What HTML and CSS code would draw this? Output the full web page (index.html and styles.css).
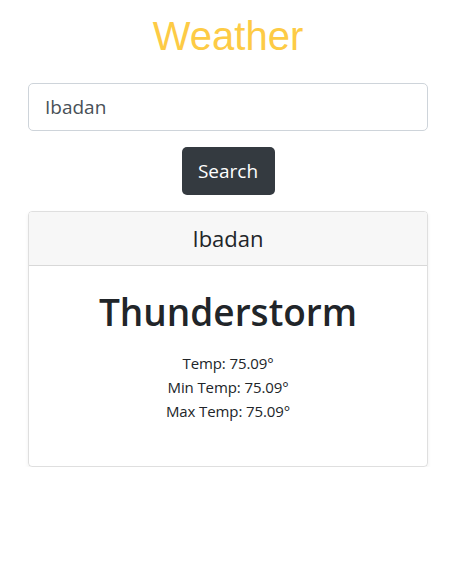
FILE: index.html
```html
<!DOCTYPE html>
<html>
<head>
<meta charset="utf-8">
<link rel="stylesheet" href="styles.css">
</head>
<body>
<div class="app">
  <h1 class="title">Weather</h1>
  <form class="search">
    <input class="field" type="text" value="Ibadan">
    <button class="btn" type="button">Search</button>
  </form>
  <div class="card">
    <div class="card-header">Ibadan</div>
    <div class="card-body">
      <h2 class="cond">Thunderstorm</h2>
      <p class="line">Temp: 75.09°</p>
      <p class="line">Min Temp: 75.09°</p>
      <p class="line">Max Temp: 75.09°</p>
    </div>
  </div>
</div>
</body>
</html>
```
FILE: styles.css
```css
* { box-sizing: border-box; }
html, body { margin: 0; padding: 0; background: #fff; }
body {
  font-family: "Open Sans", "Noto Sans", sans-serif;
  color: #212529;
  font-size: 16px;
  line-height: 1.5;
}
.app {
  width: 400px;
  margin-left: 28px;
  padding-top: 10px;
}
.title {
  margin: 0;
  text-align: center;
  font-family: "Liberation Sans", Arial, sans-serif;
  font-weight: 400;
  font-size: 40px;
  line-height: 52px;
  color: #fdcb45;
}
.search {
  margin-top: 21px;
  display: flex;
  flex-direction: column;
  align-items: center;
  gap: 16px;
}
.field {
  width: 100%;
  height: 48px;
  border: 1px solid #ced4da;
  border-radius: 5px;
  padding: 0 16px;
  font-family: inherit;
  font-size: 19px;
  color: #495057;
}
.btn {
  width: 93px;
  height: 48px;
  border: none;
  border-radius: 5px;
  background: #343a40;
  color: #fff;
  font-family: inherit;
  font-size: 19px;
  padding: 0;
}
.card {
  margin-top: 16px;
  border: 1px solid rgba(0,0,0,0.125);
  border-radius: 4px;
  box-shadow: 0 2px 4px rgba(0,0,0,0.06);
  overflow: hidden;
}
.card-header {
  background: #f7f7f7;
  border-bottom: 1px solid rgba(0,0,0,0.125);
  height: 54px;
  display: flex;
  align-items: center;
  justify-content: center;
  font-size: 22px;
}
.card-body {
  padding: 20px 20px 43px;
  text-align: center;
}
.cond {
  margin: 0 0 13px;
  font-size: 37px;
  font-weight: 600;
  line-height: 52px;
}
.line {
  margin: 0;
  font-size: 15px;
  letter-spacing: -0.1px;
  line-height: 24px;
}
```
